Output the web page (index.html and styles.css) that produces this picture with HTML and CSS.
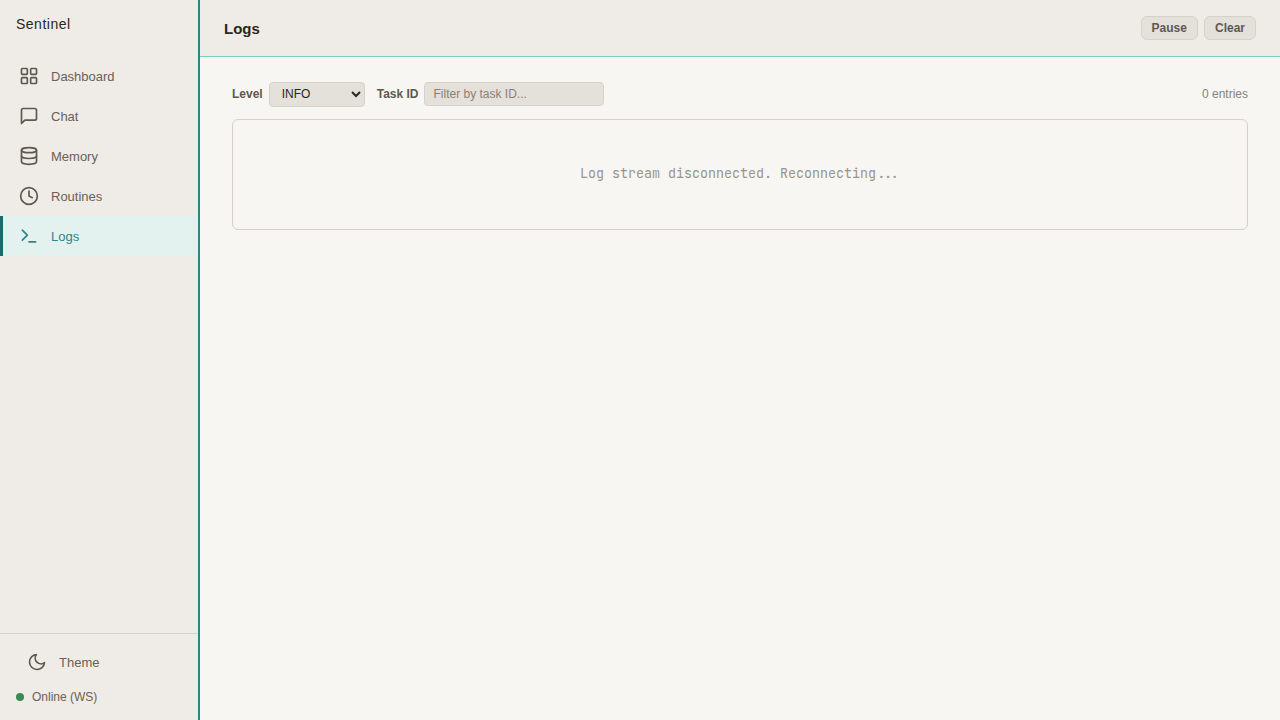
FILE: index.html
```html
<!DOCTYPE html>
<html lang="en">
<head>
<meta charset="utf-8">
<title>Sentinel Logs</title>
<link rel="stylesheet" href="styles.css">
</head>
<body>
<div class="app">
  <aside class="sidebar">
    <div class="brand">Sentinel</div>
    <nav class="nav">
      <a class="nav-item"><svg class="icon" viewBox="0 0 24 24"><rect x="3" y="3" width="7" height="7" rx="1"/><rect x="14" y="3" width="7" height="7" rx="1"/><rect x="3" y="14" width="7" height="7" rx="1"/><rect x="14" y="14" width="7" height="7" rx="1"/></svg>Dashboard</a>
      <a class="nav-item"><svg class="icon" viewBox="0 0 24 24"><path d="M21 15a2 2 0 0 1-2 2H7l-4 4V5a2 2 0 0 1 2-2h14a2 2 0 0 1 2 2z"/></svg>Chat</a>
      <a class="nav-item"><svg class="icon" viewBox="0 0 24 24"><ellipse cx="12" cy="5" rx="9" ry="3"/><path d="M3 5v14c0 1.66 4 3 9 3s9-1.34 9-3V5"/><path d="M3 12c0 1.66 4 3 9 3s9-1.34 9-3"/></svg>Memory</a>
      <a class="nav-item"><svg class="icon" viewBox="0 0 24 24"><circle cx="12" cy="12" r="10"/><path d="M12 6v6l4 2"/></svg>Routines</a>
      <a class="nav-item active"><svg class="icon" viewBox="0 0 24 24"><path d="M4 17l6-6-6-6"/><path d="M12 19h8"/></svg>Logs</a>
    </nav>
    <div class="side-foot">
      <button class="theme"><svg class="icon" viewBox="0 0 24 24"><path d="M21 12.79A9 9 0 1 1 11.21 3 7 7 0 0 0 21 12.79z"/></svg>Theme</button>
      <div class="status"><span class="dot"></span>Online (WS)</div>
    </div>
  </aside>
  <main class="main">
    <header class="topbar">
      <h1 class="title">Logs</h1>
      <div class="actions">
        <button class="btn">Pause</button>
        <button class="btn">Clear</button>
      </div>
    </header>
    <section class="content">
      <div class="filters">
        <label class="label" for="level">Level</label>
        <select class="select" id="level"><option>INFO</option><option>WARN</option><option>ERROR</option></select>
        <label class="label task-label" for="task">Task ID</label>
        <input class="input" id="task" placeholder="Filter by task ID...">
        <span class="count">0 entries</span>
      </div>
      <div class="logbox">Log stream disconnected. Reconnecting...</div>
    </section>
  </main>
</div>
</body>
</html>
```
FILE: styles.css
```css
* { box-sizing: border-box; }
html, body { margin: 0; height: 100%; }
body {
  font-family: "Liberation Sans", Arial, sans-serif;
  background: #f8f6f2;
  color: #1c1a18;
}
.app { display: flex; height: 720px; overflow: hidden; }
.sidebar {
  width: 200px;
  flex: none;
  display: flex;
  flex-direction: column;
  background: #efebe6;
  border-right: 2px solid #2e8585;
}
.brand {
  height: 56px;
  padding: 16px 16px 0;
  font-size: 14px;
  line-height: 16px;
  letter-spacing: 0.5px;
  color: #2a2622;
}
.nav { display: flex; flex-direction: column; flex: 1; }
.nav-item {
  height: 40px;
  display: flex;
  align-items: center;
  gap: 12px;
  font-size: 13px;
  color: #6b6058;
  border-left: 3px solid transparent;
  padding-left: 16px;
}
.nav-item.active {
  background: #e3f2ef;
  color: #2e8585;
  border-left-color: #1a6b6b;
}
.icon {
  width: 20px;
  height: 20px;
  flex: none;
  fill: none;
  stroke: currentColor;
  stroke-width: 2;
  stroke-linecap: round;
  stroke-linejoin: round;
}
.nav-item .icon { stroke: #5f5850; }
.nav-item.active .icon { stroke: #2e8585; }
.side-foot {
  border-top: 1px solid #d6d2cb;
  height: 87px;
  display: flex;
  flex-direction: column;
}
.theme {
  height: 56px;
  flex: none;
  border: 0;
  background: none;
  display: flex;
  align-items: center;
  gap: 12px;
  padding: 0 0 0 27px;
  font: 13px "Liberation Sans", Arial, sans-serif;
  color: #6b6058;
}
.theme .icon { stroke: #5f5850; }
.status {
  display: flex;
  align-items: center;
  gap: 8px;
  padding-left: 16px;
  font-size: 12px;
  line-height: 14px;
  color: #6b6058;
}
.dot { width: 8px; height: 8px; border-radius: 50%; background: #3a8a55; }
.main { flex: 1; display: flex; flex-direction: column; min-width: 0; }
.topbar {
  height: 57px;
  flex: none;
  display: flex;
  align-items: center;
  justify-content: space-between;
  padding: 0 24px;
  background: #efebe6;
  border-bottom: 1px solid #7fcdc5;
}
.title { margin: 0; font-size: 15px; font-weight: 700; color: #2a2622; }
.actions { display: flex; gap: 6px; }
.btn {
  height: 24px;
  padding: 0 10px;
  border: 1px solid #d6d2cb;
  border-radius: 6px;
  background: #e4e0da;
  font: 700 12px "Liberation Sans", Arial, sans-serif;
  color: #5f5850;
}
.content { padding: 25px 32px; }
.filters { display: flex; align-items: center; height: 24px; margin-bottom: 13px; }
.label { font-size: 12px; font-weight: 700; color: #5f5850; margin-right: 6px; }
.task-label { margin-left: 12px; }
.select {
  width: 96px;
  height: 25px;
  padding: 0 8px;
  border: 1px solid #d6d2cb;
  border-radius: 4px;
  background: #e4e0da;
  font: 12px "Liberation Sans", Arial, sans-serif;
  color: #2a2622;
}
.input {
  width: 180px;
  height: 24px;
  padding: 0 8px;
  border: 1px solid #d6d2cb;
  border-radius: 4px;
  background: #e4e0da;
  font: 12px "Liberation Sans", Arial, sans-serif;
  color: #2a2622;
}
.input::placeholder { color: #8a8178; opacity: 1; }
.count { margin-left: auto; font-size: 12px; color: #8a8178; }
.logbox {
  height: 111px;
  border: 1px solid #d6d2cb;
  border-radius: 6px;
  display: flex;
  align-items: center;
  justify-content: center;
  padding-bottom: 3px;
  font-family: "JetBrains Mono", "Fira Code", monospace;
  font-size: 13.33px;
  color: #9a948c;
}
```
